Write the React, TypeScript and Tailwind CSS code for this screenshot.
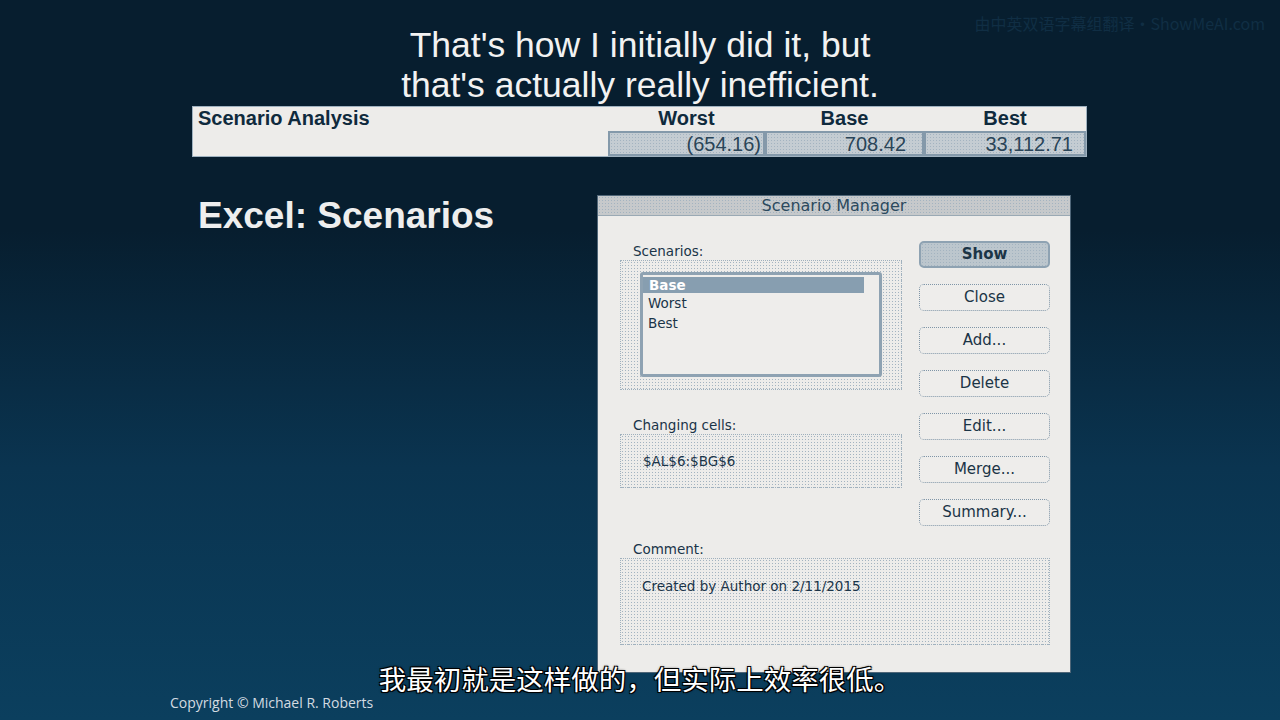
import React from 'react';

const dots = 'bg-[radial-gradient(#a3b3c0_0.8px,transparent_0.9px)] bg-[length:3px_3px]';

const DialogButton: React.FC<{ label: string; primary?: boolean }> = ({ label, primary }) => (
  <div
    className={
      primary
        ? `h-[27px] rounded-[5px] border-2 border-[#8ea2b2] bg-[#bcc6cd] ${dots} flex items-center justify-center text-[15px] font-bold text-[#1b3446]`
        : 'h-[27px] rounded-[5px] border border-dotted border-[#7f95a7] bg-[#eeedeb] flex items-center justify-center text-[15px] text-[#1b3446]'
    }
  >
    {label}
  </div>
);

const App: React.FC = () => {
  return (
    <div className="relative w-[1280px] h-[720px] overflow-hidden bg-[linear-gradient(180deg,#071e2f_0%,#071e2f_32%,#0a3450_65%,#0b3f5e_100%)] font-['Liberation_Sans',Arial,sans-serif]">
      {/* watermark */}
      <div className="absolute top-[11px] right-[15px] text-[16px] text-[#102e44] font-['Noto_Sans_CJK_SC',sans-serif]">
        由中英双语字幕组翻译·ShowMeAI.com
      </div>

      {/* top subtitle */}
      <div className="pt-[25px] text-center text-[35.5px] leading-[40px] text-[#f2f2f2]">
        <div>That's how I initially did it, but</div>
        <div>that's actually really inefficient.</div>
      </div>

      {/* scenario table */}
      <div className="mt-[1px] ml-[192px] w-[895px] h-[51px] bg-[#edecea] border border-[#9fb2c0] flex flex-col text-[20px] text-[#0f2a3d]">
        <div className="flex h-[25px] leading-[22px] font-bold">
          <div className="w-[415px] pl-[5px]">Scenario Analysis</div>
          <div className="w-[157px] text-center">Worst</div>
          <div className="w-[159px] text-center">Base</div>
          <div className="flex-1 text-center">Best</div>
        </div>
        <div className="flex h-[25px] leading-[22px]">
          <div className="w-[415px]" />
          <div className={`w-[157px] border-2 border-[#8499aa] bg-[#c4ccd2] ${dots} text-right pr-[2px] text-[#2a4558]`}>(654.16)</div>
          <div className={`w-[159px] border-2 border-[#8499aa] bg-[#c4ccd2] ${dots} text-right pr-[16px] text-[#2a4558]`}>708.42</div>
          <div className={`flex-1 border-2 border-[#8499aa] bg-[#c4ccd2] ${dots} text-right pr-[11px] text-[#2a4558]`}>33,112.71</div>
        </div>
      </div>

      {/* body row */}
      <div className="flex mt-[38px]">
        <div className="pl-[198px] text-[37px] leading-[42px] font-bold text-[#eeeeee]">Excel: Scenarios</div>

        <div className="ml-auto mr-[209px] w-[474px] h-[478px] bg-[#edecea] border border-[#4f6678] font-['DejaVu_Sans',sans-serif] text-[#1a3448]">
          <div className={`h-[20px] bg-[#c6c9cb] ${dots} border-b border-[#9aa9b4] flex items-center justify-center text-[16px] text-[#2c4a5e]`}>
            Scenario Manager
          </div>
          <div className="flex pl-[22px] pr-[20px]">
            <div className="w-[282px]">
              <div className="mt-[27px] pl-[13px] text-[13.5px] leading-[16px]">Scenarios:</div>
              <div className={`mt-[1px] h-[130px] border border-dotted border-[#9fb0bd] ${dots} pt-[11px] pl-[19px] pr-[19px]`}>
                <div className="h-[105px] rounded-[3px] border-[3px] border-[#8ea2b2] bg-[#eeedeb] pt-[2px] pr-[15px] text-[13.5px] leading-[20px]">
                  <div className="h-[16px] leading-[16px] bg-[#879eb0] text-white font-bold pl-[6px]">Base</div>
                  <div className="pl-[5px]">Worst</div>
                  <div className="pl-[5px]">Best</div>
                </div>
              </div>
              <div className="mt-[27px] pl-[13px] text-[13.5px] leading-[16px]">Changing cells:</div>
              <div className={`mt-[1px] h-[54px] border border-dotted border-[#9fb0bd] ${dots} pl-[22px] flex items-center text-[13.5px]`}>
                $AL$6:$BG$6
              </div>
            </div>
            <div className="ml-auto w-[131px] mt-[25px] flex flex-col gap-[16px]">
              <DialogButton label="Show" primary />
              <DialogButton label="Close" />
              <DialogButton label="Add..." />
              <DialogButton label="Delete" />
              <DialogButton label="Edit..." />
              <DialogButton label="Merge..." />
              <DialogButton label="Summary..." />
            </div>
          </div>
          <div className="pl-[22px] pr-[20px]">
            <div className="mt-[15px] pl-[13px] text-[13.5px] leading-[16px]">Comment:</div>
            <div className={`mt-[1px] h-[87px] border border-dotted border-[#9fb0bd] ${dots} pl-[21px] pt-[17px] text-[13.5px]`}>
              Created by Author on 2/11/2015
            </div>
          </div>
        </div>
      </div>

      {/* copyright */}
      <div className="absolute left-[170px] top-[692px] text-[14px] text-[#d3dbe1] font-['Open_Sans',sans-serif]">
        Copyright © Michael R. Roberts
      </div>

      {/* bottom subtitle */}
      <div className="absolute left-0 right-0 top-[659px] text-center text-[27.5px] leading-[38px] text-white font-['Noto_Sans_CJK_SC',sans-serif] [text-shadow:1px_1px_0_#000,-1px_-1px_0_#000,1px_-1px_0_#000,-1px_1px_0_#000,0_0_3px_#000]">
        我最初就是这样做的，但实际上效率很低。
      </div>
    </div>
  );
};

export default App;
